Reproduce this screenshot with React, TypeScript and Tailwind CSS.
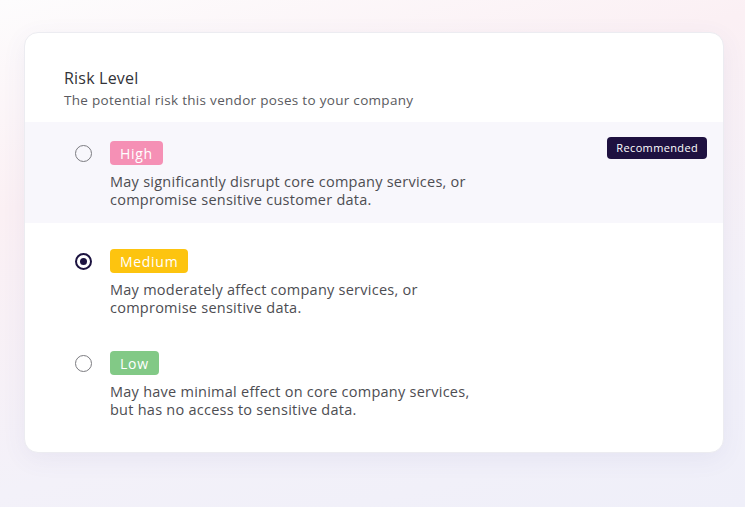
import { ReactNode } from 'react';

type Level = {
  label: string;
  badgeClass: string;
  description: ReactNode;
  selected?: boolean;
  highlighted?: boolean;
  recommended?: boolean;
};

const levels: Level[] = [
  {
    label: 'High',
    badgeClass: 'bg-[#f590b5]',
    description: (
      <>
        May significantly disrupt core company services, or
        <br />
        compromise sensitive customer data.
      </>
    ),
    highlighted: true,
    recommended: true,
  },
  {
    label: 'Medium',
    badgeClass: 'bg-[#fdc40f]',
    description: (
      <>
        May moderately affect company services, or
        <br />
        compromise sensitive data.
      </>
    ),
    selected: true,
  },
  {
    label: 'Low',
    badgeClass: 'bg-[#82c986]',
    description: (
      <>
        May have minimal effect on core company services,
        <br />
        but has no access to sensitive data.
      </>
    ),
  },
];

function Radio({ checked }: { checked?: boolean }) {
  if (checked) {
    return (
      <span className="flex h-[17px] w-[17px] shrink-0 items-center justify-center rounded-full border-2 border-[#1c1340]">
        <span className="h-[7px] w-[7px] rounded-full bg-[#1c1340]" />
      </span>
    );
  }
  return <span className="h-[17px] w-[17px] shrink-0 rounded-full border-[1.5px] border-[#7b7b80]" />;
}

function LevelRow({ level }: { level: Level }) {
  return (
    <div
      className={`relative pl-[50px] ${
        level.highlighted ? 'bg-[#f8f7fc] pt-[19px] pb-[14px]' : 'pt-[26px] pb-2'
      }`}
    >
      {level.recommended && (
        <span className="absolute right-4 top-[15px] flex h-[22px] items-center rounded-[4px] bg-[#1e1140] px-[9px] text-[11px] font-medium tracking-[0.35px] text-white">
          Recommended
        </span>
      )}
      <div className="flex items-center gap-[18px]">
        <Radio checked={level.selected} />
        <span
          className={`flex h-6 items-center rounded-[4px] px-[10px] text-[14px] font-medium tracking-[0.7px] text-white ${level.badgeClass}`}
        >
          {level.label}
        </span>
      </div>
      <p className="mt-2 pl-[35px] text-[14.5px] leading-[18px] tracking-[0.25px] text-[#4d4d52]">
        {level.description}
      </p>
    </div>
  );
}

export default function App() {
  return (
    <div
      className="h-[507px] w-[745px] overflow-hidden bg-[linear-gradient(165deg,#fdfcfd_0%,#fbf0f4_30%,#f3f1f9_70%,#efeff9_100%)] pt-[32px] pl-6 pr-[21px]"
      style={{ fontFamily: '"Open Sans", "Noto Sans", sans-serif' }}
    >
      <div className="h-[421px] overflow-hidden rounded-[14px] border border-[#ececf1] bg-white shadow-[0_6px_24px_rgba(90,80,150,0.07)]">
        <div className="px-[39px] pt-[35px] pb-[13px]">
          <h2 className="text-[16px] leading-5 tracking-[0.2px] text-[#333338]">Risk Level</h2>
          <p className="mt-[3px] text-[13.5px] leading-[18px] tracking-[0.3px] text-[#5a5a60]">
            The potential risk this vendor poses to your company
          </p>
        </div>
        {levels.map(level => (
          <LevelRow key={level.label} level={level} />
        ))}
      </div>
    </div>
  );
}
